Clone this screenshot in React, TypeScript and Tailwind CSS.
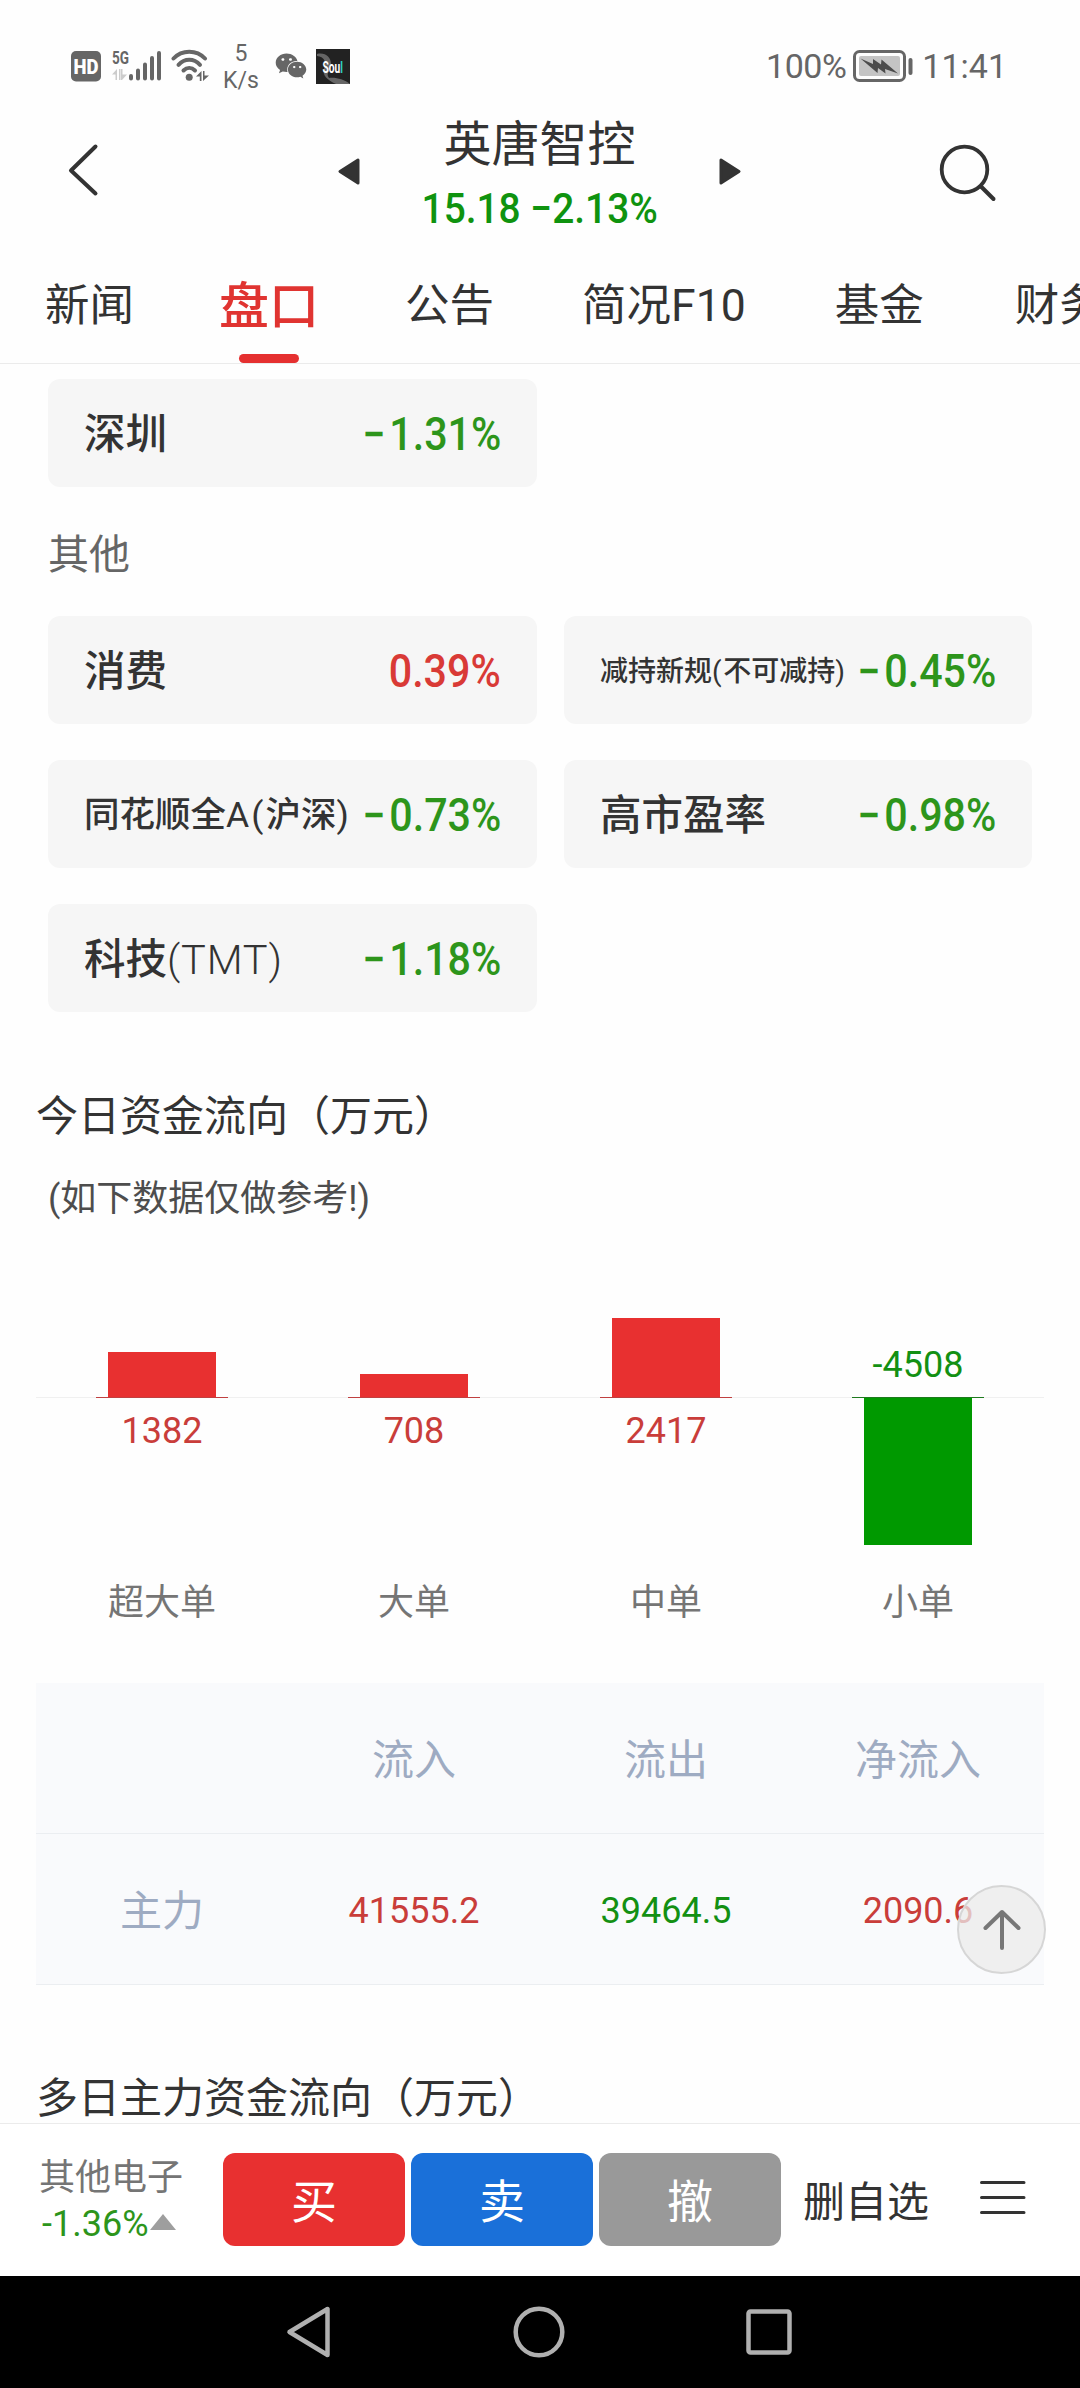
import * as React from 'react';
import { FaWeixin } from 'react-icons/fa';

type Trend = 'up' | 'down';

interface Plate {
    name: string;
    change: string;
    trend: Trend;
    nameClass?: string;
}

interface FlowBar {
    label: string;
    value: number;
}

const otherPlates: Plate[] = [
    { name: '消费', change: '0.39%', trend: 'up' },
    { name: '减持新规(不可减持)', change: '−0.45%', trend: 'down', nameClass: 'text-[28px]' },
    { name: '同花顺全A(沪深)', change: '−0.73%', trend: 'down', nameClass: 'text-[35.500px]' },
    { name: '高市盈率', change: '−0.98%', trend: 'down' },
    { name: '科技(TMT)', change: '−1.18%', trend: 'down' },
];

const flowBars: FlowBar[] = [
    { label: '超大单', value: 1382 },
    { label: '大单', value: 708 },
    { label: '中单', value: 2417 },
    { label: '小单', value: -4508 },
];

// px per 万元
const BAR_SCALE = 0.0327;

const trendColors = {
    up: 'text-[#d93a36]',
    down: 'text-[#2d951b]',
};

const StatusBar: React.FC = () => (
    <div className="flex h-[105px] shrink-0 items-start justify-between pl-[71px] pr-[73px] text-[#666]">
        <div className="flex items-start pt-[45px]">
            <svg className="mt-[6px]" width="30" height="31" viewBox="0 0 30 31">
                <rect width="30" height="30.5" rx="5" fill="#666" />
                <text x="15" y="22.5" textAnchor="middle" fontSize="20" fontWeight="900" fontFamily="Roboto, sans-serif" fill="#fff" textLength="25" lengthAdjust="spacingAndGlyphs">HD</text>
            </svg>
            <svg className="ml-[11px] mt-[4px] overflow-visible" width="50" height="33" viewBox="0 0 50 33">
                <text x="0" y="14.5" fontSize="19" fontWeight="700" fontFamily="Roboto, sans-serif" fill="#666" textLength="17" lengthAdjust="spacingAndGlyphs">5G</text>
                <path d="M0 25.5 L5 20 V31 H3.500 V25.500Z M7 20 H8.500 V31 H7Z M9 20 H10.500 V25.500 H15 L10 31 H9Z" fill="#ccc" />
                <g stroke="#666" strokeWidth="4" strokeLinecap="round">
                    <path d="M19 27V29.500M26 21.500V29.500M33 15.500V29.500M40 9V29.500M47 4V29.500" />
                </g>
            </svg>
            <svg className="ml-[9px] mt-[3px]" width="39" height="34" viewBox="0 0 39 34">
                <g fill="none" stroke="#666" strokeWidth="4" strokeLinecap="round">
                    <path d="M2.500 10.500C11 1.500 25.500 1.500 34 10.500" />
                    <path d="M7.500 16.800C13.500 10.200 23 10.200 29 16.800" />
                    <path d="M12.500 22.500C16 19 20.500 19 24 22.500" />
                </g>
                <circle cx="18.200" cy="29.300" r="3.500" fill="#666" />
                <path d="M25 28.500 L30.500 23 V33 H28.800 V28.500Z M32 23 H33.500 V27.500 H38 L32 33Z" fill="#666" />
            </svg>
            <div className="-mt-[5px] ml-[13px] flex w-[36px] flex-col items-center text-[23px] leading-[27px]">
                <span>5</span>
                <span>K/s</span>
            </div>
            <FaWeixin className="ml-[16px] mt-[5px] size-[32px]" />
            <svg className="ml-[9px] mt-[4px]" width="34" height="35" viewBox="0 0 34 35">
                <rect width="34" height="35" fill="#222" />
                <path d="M1 5C9 3 15 8 15 15C15 22 9 24 13 29C19 28 28 30 34 35H20C11 31 6 26 8 20C11 12 8 8 1 7Z" fill="#666" />
                <text transform="translate(6.500 23.500) scale(0.6 1)" fontSize="17" fontWeight="700" fontFamily="Roboto, sans-serif" fill="#fff">Sou<tspan fill="#2fd3c4">l</tspan></text>
            </svg>
        </div>
        <div className="flex items-center pt-[46px] text-[34px] leading-[40px]">
            <span className="tracking-[-0.5px]">100%</span>
            <svg className="ml-[7px]" width="61" height="34" viewBox="0 0 61 34">
                <rect x="1.500" y="2.500" width="50" height="29" rx="5" fill="none" stroke="#666" strokeWidth="3" />
                <rect x="6" y="7" width="41" height="20" rx="2" fill="#c4c4c4" />
                <path d="M7.500 9.500 L20 15 L20 10 L28 15.500 L28.500 10.500 L45 24.500 L32 20 L32.500 24.500 L25 19 L24.500 24Z" fill="#4c4c4c" />
                <rect x="55.500" y="9" width="4" height="17" rx="2" fill="#666" />
            </svg>
            <span className="ml-[8px]">11:41</span>
        </div>
    </div>
);

const Header: React.FC = () => (
    <header className="flex h-[145px] shrink-0 items-start pl-[68px]">
        <svg className="mt-[38px]" width="32" height="54" viewBox="0 0 32 54">
            <path d="M27.500 3.500 L3 27.500 L27.500 50.500" fill="none" stroke="#333" strokeWidth="4" strokeLinecap="round" strokeLinejoin="round" />
        </svg>
        <div className="ml-[238px] flex items-start">
            <svg className="mt-[53px]" width="22" height="27" viewBox="0 0 22 27">
                <path d="M2 13.500 L20 2 V25Z" fill="#333" stroke="#333" strokeWidth="3" strokeLinejoin="round" />
            </svg>
            <div className="flex w-[359px] flex-col items-center">
                <h1 className="mt-[12px] text-[48px] font-normal leading-[56px] text-[#333]">英唐智控</h1>
                <p className="mt-[11px] origin-center scale-x-[0.925] whitespace-nowrap text-[42px] font-medium leading-[50px] text-[#0f930f]">15.18 −2.13%</p>
            </div>
            <svg className="mt-[53px]" width="22" height="27" viewBox="0 0 22 27">
                <path d="M20 13.500 L2 2 V25Z" fill="#333" stroke="#333" strokeWidth="3" strokeLinejoin="round" />
            </svg>
        </div>
        <svg className="ml-[197px] mt-[38px]" width="60" height="60" viewBox="0 0 60 60">
            <circle cx="26.500" cy="26.500" r="22.800" fill="none" stroke="#333" strokeWidth="3.800" />
            <path d="M43.500 44 L55.500 56" stroke="#333" strokeWidth="4" strokeLinecap="round" />
        </svg>
    </header>
);

const Tabs: React.FC = () => (
    <nav className="flex h-[114px] shrink-0 whitespace-nowrap border-b border-[#ebebeb] pl-[45px] text-[44.500px] leading-[60px] text-[#333]">
        <span className="mt-[26px]">新闻</span>
        <span className="ml-[85px] flex flex-col items-center">
            <b className="mt-[27px] text-[50px] font-medium leading-[60px] text-[#e03431]">盘口</b>
            <i className="mt-[17px] h-[9px] w-[60px] rounded-full bg-[#e53030]" />
        </span>
        <span className="ml-[86px] mt-[26px]">公告</span>
        <span className="ml-[88px] mt-[26px]">简况F10</span>
        <span className="ml-[89px] mt-[26px]">基金</span>
        <span className="ml-[91px] mt-[26px]">财务</span>
    </nav>
);

const PlateCard: React.FC<{ plate: Plate }> = ({ plate }) => {
    // latin letters and brackets are drawn lighter than the Chinese part
    const parts = plate.name.split(/([A-Z()]+)/);
    const isNegative = plate.change.startsWith('−');
    return (
        <div className="flex h-[108px] items-center justify-between whitespace-nowrap rounded-xl bg-[#f6f6f6] px-[36px] pt-[4px]">
            <span className={`font-medium text-[#333] ${plate.nameClass || 'text-[41.500px]'}`}>
                {parts.map((part, i) => (
                    i % 2 ? <span key={i} className={part.length > 2 ? 'font-light tracking-[0.02em]' : 'font-normal tracking-[0.06em]'}>{part}</span> : part
                ))}
            </span>
            <span className={`w-0 text-[45.500px] font-medium ${trendColors[plate.trend]}`}>
                <span className="float-right origin-right scale-x-[0.905]">
                    {isNegative && <span className="mr-[4px]">−</span>}
                    {plate.change.replace('−', '')}
                </span>
            </span>
        </div>
    );
};

const FlowColumn: React.FC<{ bar: FlowBar }> = ({ bar }) => {
    const isUp = bar.value > 0;
    const height = Math.round(Math.abs(bar.value) * BAR_SCALE);
    return (
        <div className="flex flex-col items-center text-[36px] leading-[42px]">
            <div className="flex h-[100px] flex-col items-center justify-end">
                {isUp ? <div className="w-[108px] bg-[#e83030]" style={{ height }} /> : <span className="mb-[11px] text-[#139013]">{bar.value}</span>}
            </div>
            <div className="flex h-px w-full justify-center bg-[#f0f0f0]">
                <div className={`w-[132px] ${isUp ? 'bg-[#c04040]' : 'bg-[#1e7a1e]'}`} />
            </div>
            <div className="flex h-[184px] flex-col items-center">
                {isUp ? <span className="mt-[12px] text-[#c93d3a]">{bar.value}</span> : <div className="w-[108px] bg-[#009900]" style={{ height }} />}
            </div>
            <span className="text-[#757575]">{bar.label}</span>
        </div>
    );
};

const FlowTable: React.FC = () => (
    <div className="mx-[36px] mt-[59px] shrink-0 bg-[#f9fafc] text-center text-[36px]">
        <div className="grid h-[151px] grid-cols-4 items-center border-b border-[#ebeef1] pt-[4px] text-[42px] text-[#9eabc2]">
            <span />
            <span>流入</span>
            <span>流出</span>
            <span>净流入</span>
        </div>
        <div className="grid h-[151px] grid-cols-4 items-center border-b border-[#ebeef1] pt-[4px]">
            <span className="text-[42px] text-[#9eabc2]">主力</span>
            <span className="text-[#c93d3a]">41555.2</span>
            <span className="text-[#139013]">39464.5</span>
            <span className="text-[#c93d3a]">2090.6</span>
        </div>
    </div>
);

const TradeBar: React.FC = () => (
    <footer className="flex h-[153px] shrink-0 items-start border-t border-[#ebebeb] bg-white">
        <div className="ml-[39px] mt-[32px] w-[184px] text-[36px] leading-[45px]">
            <p className="text-[#757575]">其他电子</p>
            <p className="mt-[1px] flex items-center pl-[3px] text-[#2d951b]">
                -1.36%
                <svg className="-mt-[5px] ml-[1px]" width="26" height="16" viewBox="0 0 26 16">
                    <path d="M13 0 L26 16 H0Z" fill="#9e9e9e" />
                </svg>
            </p>
        </div>
        <div className="mt-[29px] flex gap-[6px] text-[46px] text-white">
            <button className="h-[93px] w-[182px] rounded-xl bg-[#e83030] pt-[5px]">买</button>
            <button className="h-[93px] w-[182px] rounded-xl bg-[#1a70d9] pt-[5px]">卖</button>
            <button className="h-[93px] w-[182px] rounded-xl bg-[#999] pt-[5px]">撤</button>
        </div>
        <span className="ml-[22px] mt-[49px] text-[42px] leading-[60px] text-[#333]">删自选</span>
        <svg className="ml-[51px] mt-[56px]" width="46" height="36" viewBox="0 0 46 36">
            <path d="M1.500 2.500H44M1.500 17.500H44M1.500 32.500H44" stroke="#333" strokeWidth="3" strokeLinecap="round" />
        </svg>
    </footer>
);

const NavBar: React.FC = () => (
    <div className="flex h-[112px] shrink-0 items-center justify-between bg-black pl-[286px] pr-[287px]">
        <svg width="46" height="54" viewBox="0 0 46 54" fill="none" stroke="#b0b0b0" strokeWidth="4.500">
            <path d="M41.500 4 V50 L3.500 27Z" strokeLinejoin="round" />
        </svg>
        <svg width="52" height="52" viewBox="0 0 52 52" fill="none" stroke="#b0b0b0" strokeWidth="4.500">
            <circle cx="26" cy="26" r="23.300" />
        </svg>
        <svg width="48" height="48" viewBox="0 0 48 48" fill="none" stroke="#b0b0b0" strokeWidth="4.500">
            <rect x="3.500" y="3.500" width="41" height="41" rx="2" />
        </svg>
    </div>
);

const App: React.FC = () => {
    return (
        <div className="relative flex h-[2388px] w-[1080px] flex-col overflow-hidden bg-[#fefefe] font-[Roboto,'Noto_Sans_CJK_SC',sans-serif]">
            <StatusBar />
            <Header />
            <Tabs />

            <main className="flex min-h-0 flex-1 flex-col overflow-hidden">
                <div className="grid shrink-0 grid-cols-[489px_468px] gap-x-[27px] px-[48px] pt-[15px]">
                    <PlateCard plate={{ name: '深圳', change: '−1.31%', trend: 'down' }} />
                </div>
                <h2 className="ml-[48px] mt-[38px] shrink-0 text-[41px] leading-[60px] text-[#666]">其他</h2>
                <div className="mt-[31px] grid shrink-0 grid-cols-[489px_468px] gap-x-[27px] gap-y-[36px] px-[48px]">
                    {otherPlates.map(plate => (
                        <PlateCard key={plate.name} plate={plate} />
                    ))}
                </div>

                <h2 className="ml-[36px] mt-[75px] shrink-0 text-[42px] leading-[60px] text-[#333]">今日资金流向（万元）</h2>
                <p className="ml-[48px] mt-[25px] shrink-0 text-[36px] leading-[54px] text-[#4d4d4d]">(如下数据仅做参考!)</p>
                <div className="mx-[36px] mt-[71px] grid shrink-0 grid-cols-4">
                    {flowBars.map(bar => (
                        <FlowColumn key={bar.label} bar={bar} />
                    ))}
                </div>
                <FlowTable />
                <h2 className="ml-[36px] mt-[84px] shrink-0 text-[42px] leading-[60px] text-[#333]">多日主力资金流向（万元）</h2>
            </main>

            <TradeBar />
            <NavBar />

            {/* back to top */}
            <button className="absolute left-[957px] top-[1885px] flex size-[89px] items-center justify-center rounded-full border-2 border-[#d6d6d6] bg-[#ebebeb]/75">
                <svg width="40" height="44" viewBox="0 0 40 44" fill="none" stroke="#777" strokeWidth="4" strokeLinecap="round" strokeLinejoin="round">
                    <path d="M20 40V4M3.500 20 L20 4 L36.500 20" />
                </svg>
            </button>
        </div>
    );
};

export default App;
